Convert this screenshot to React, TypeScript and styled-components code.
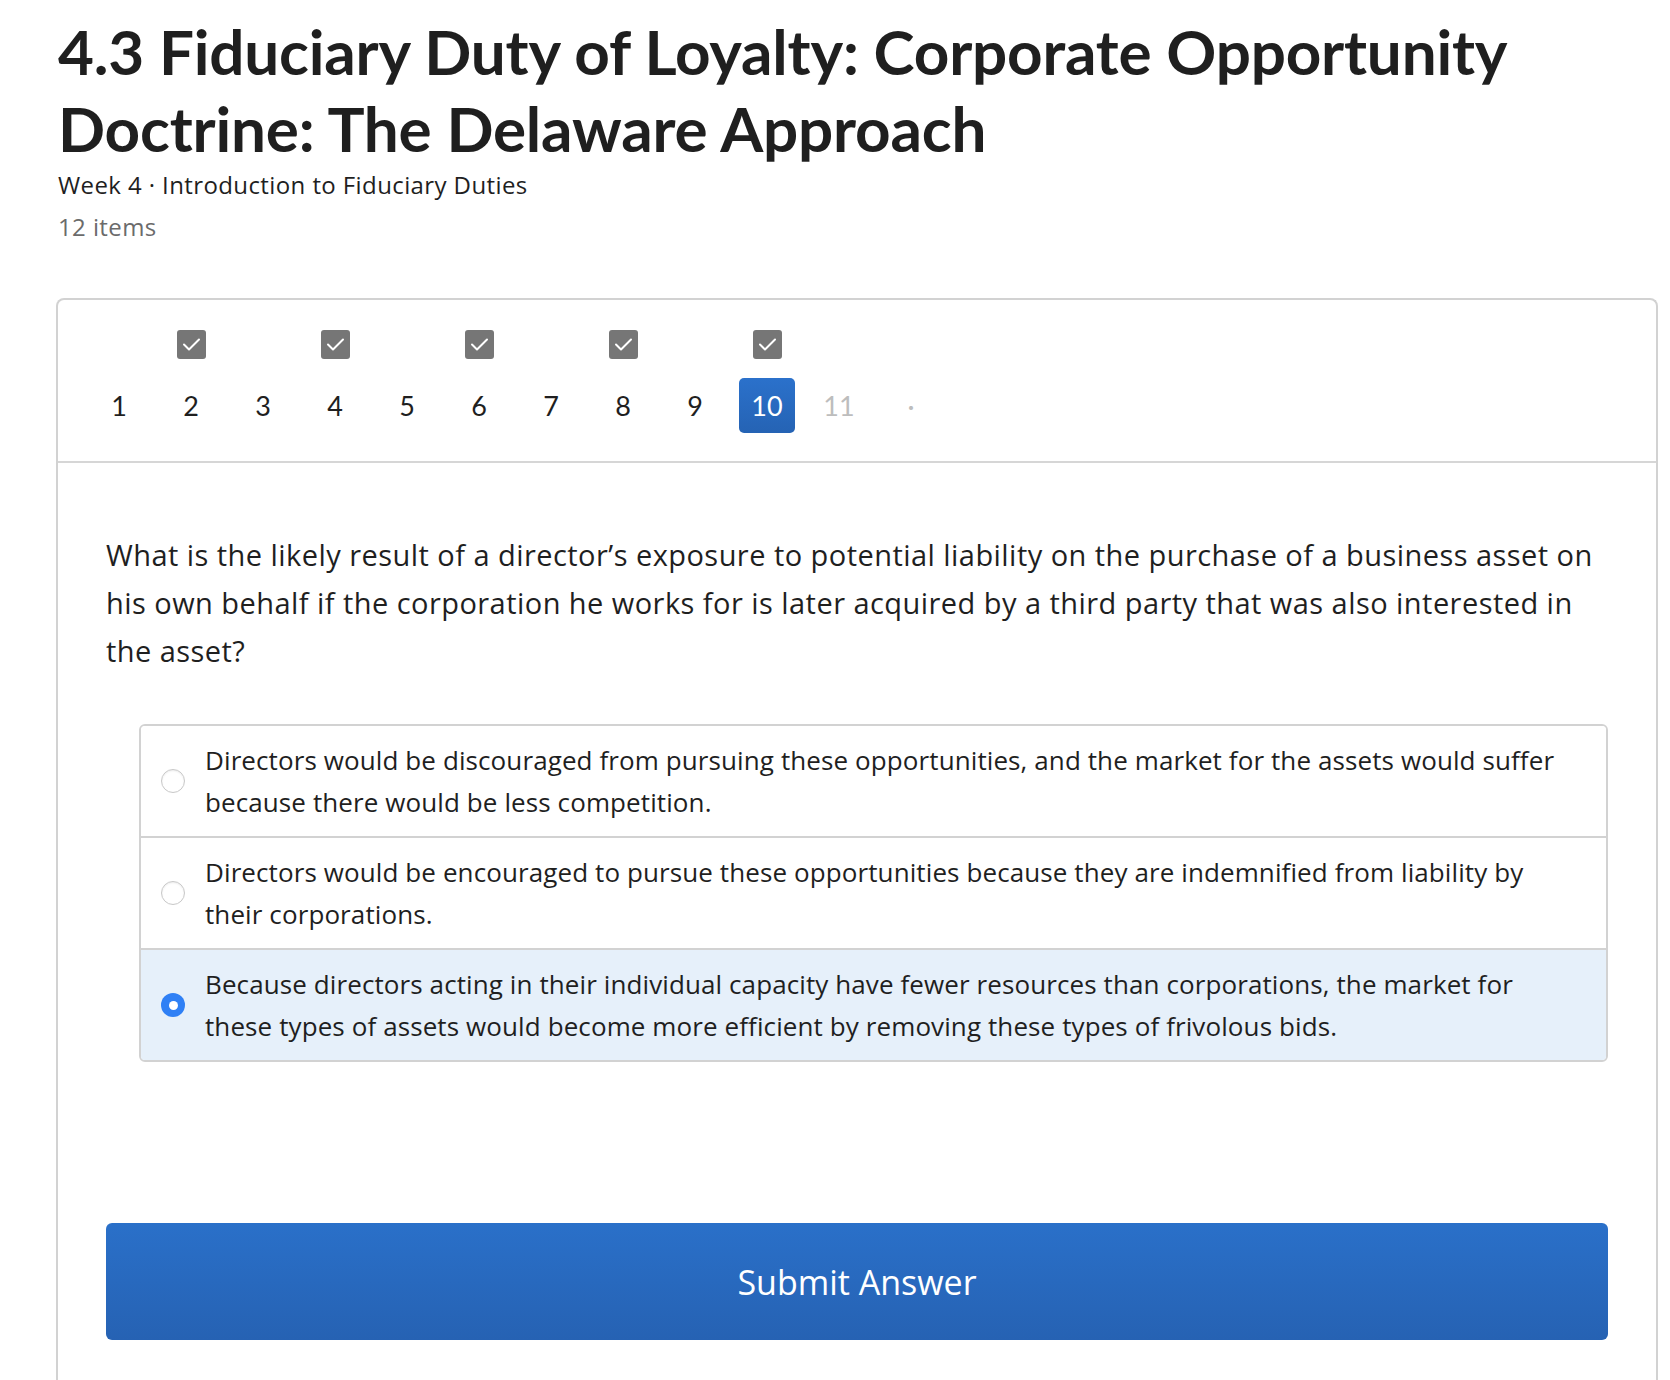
import styled, { createGlobalStyle } from 'styled-components'

const GlobalStyle = createGlobalStyle`
  html, body {
    margin: 0;
    padding: 0;
    background: #fff;
  }
  body {
    font-family: 'Open Sans', Lato, Arial, sans-serif;
    color: #1f1f1f;
    -webkit-font-smoothing: antialiased;
  }
`

const Page = styled.main`
  padding: 13px 12px 0 58px;
`

const Title = styled.h1`
  margin: 0;
  font-family: Lato, 'Open Sans', Arial, sans-serif;
  font-size: 62px;
  line-height: 77px;
  font-weight: 700;
  letter-spacing: -0.2px;
  color: #1f1f1f;
`

const Breadcrumb = styled.div`
  margin-top: 2px;
  font-size: 24px;
  line-height: 32px;
  letter-spacing: 0.4px;
`

const ItemCount = styled.div`
  margin-top: 10px;
  font-size: 24px;
  line-height: 32px;
  letter-spacing: 0.4px;
  color: #6b6b6b;
`

const Card = styled.section`
  margin-left: -2px;
  margin-top: 55px;
  border: 2px solid #d2d2d2;
  border-bottom: none;
  border-radius: 8px 8px 0 0;
  padding-bottom: 80px;
`

const Nav = styled.ol`
  list-style: none;
  margin: 0;
  padding: 30px 0 28px 33px;
  display: flex;
  gap: 16px;
  border-bottom: 2px solid #d6d6d6;
`

const NavItem = styled.li`
  width: 56px;
  display: flex;
  flex-direction: column;
  align-items: center;
  gap: 19px;
`

const Check = styled.span<{ $on: boolean }>`
  width: 29px;
  height: 29px;
  border-radius: 3px;
  background: #767676;
  display: flex;
  align-items: center;
  justify-content: center;
  visibility: ${(p) => (p.$on ? 'visible' : 'hidden')};
`

const Num = styled.span<{ $state: 'done' | 'active' | 'locked' }>`
  width: 56px;
  height: 55px;
  border-radius: 5px;
  display: flex;
  align-items: center;
  justify-content: center;
  font-family: Lato, 'Open Sans', Arial, sans-serif;
  font-size: 27px;
  color: ${(p) => (p.$state === 'active' ? '#fff' : p.$state === 'locked' ? '#bdbdbd' : '#1f1f1f')};
  background: ${(p) =>
    p.$state === 'active' ? 'linear-gradient(#2b71cb, #2563b4)' : 'transparent'};
`

const Body = styled.div`
  padding: 68px 48px 0 48px;
`

const Question = styled.p`
  margin: 0;
  font-size: 29px;
  line-height: 48px;
  letter-spacing: 0.45px;
`

const Options = styled.div`
  margin: 49px 0 0 33px;
  border: 2px solid #d2d2d2;
  border-radius: 6px;
  overflow: hidden;
`

const Option = styled.label<{ $selected: boolean }>`
  display: flex;
  align-items: center;
  gap: 20px;
  padding: 13px 40px 13px 20px;
  min-height: 84px;
  background: ${(p) => (p.$selected ? '#e6f0fa' : '#fff')};
  & + & {
    border-top: 2px solid #d2d2d2;
  }
`

const Radio = styled.span<{ $selected: boolean }>`
  flex: none;
  width: 24px;
  height: 24px;
  border-radius: 50%;
  box-sizing: border-box;
  display: flex;
  align-items: center;
  justify-content: center;
  background: ${(p) => (p.$selected ? '#2f80f5' : '#fff')};
  border: ${(p) => (p.$selected ? 'none' : '1px solid #c8c8c8')};
  box-shadow: ${(p) => (p.$selected ? 'none' : 'inset 0 1px 2px rgba(0,0,0,0.08)')};
  &::after {
    content: '';
    width: 9px;
    height: 9px;
    border-radius: 50%;
    background: #fff;
    display: ${(p) => (p.$selected ? 'block' : 'none')};
  }
`

const OptionText = styled.span`
  font-size: 26px;
  line-height: 42px;
  letter-spacing: 0.1px;
`

const Submit = styled.button`
  display: block;
  width: 100%;
  margin-top: 161px;
  height: 117px;
  border: none;
  border-radius: 6px;
  background: linear-gradient(#2a70c9, #2662b3);
  color: #fff;
  font-family: inherit;
  font-size: 34px;
  cursor: pointer;
`

const CheckIcon = () => (
  <svg width="19" height="15" viewBox="0 0 19 15" fill="none">
    <path d="M2 7.5l5 5L17 2.5" stroke="#fff" strokeWidth="2" strokeLinecap="round" strokeLinejoin="round" />
  </svg>
)

const items = [1, 2, 3, 4, 5, 6, 7, 8, 9, 10, 11]
const checked = new Set([2, 4, 6, 8, 10])

const options = [
  'Directors would be discouraged from pursuing these opportunities, and the market for the assets would suffer because there would be less competition.',
  'Directors would be encouraged to pursue these opportunities because they are indemnified from liability by their corporations.',
  'Because directors acting in their individual capacity have fewer resources than corporations, the market for these types of assets would become more efficient by removing these types of frivolous bids.',
]

export default function App() {
  const selected = 2
  return (
    <>
      <GlobalStyle />
      <Page>
        <Title>4.3 Fiduciary Duty of Loyalty: Corporate Opportunity Doctrine: The Delaware Approach</Title>
        <Breadcrumb>Week 4 · Introduction to Fiduciary Duties</Breadcrumb>
        <ItemCount>12 items</ItemCount>
        <Card>
          <Nav>
            {items.map((n) => (
              <NavItem key={n}>
                <Check $on={checked.has(n)}>
                  <CheckIcon />
                </Check>
                <Num $state={n === 10 ? 'active' : n > 10 ? 'locked' : 'done'}>{n}</Num>
              </NavItem>
            ))}
            <NavItem>
              <Check $on={false} />
              <Num $state="locked">·</Num>
            </NavItem>
          </Nav>
          <Body>
            <Question>
              What is the likely result of a director’s exposure to potential liability on the purchase of a business
              asset on his own behalf if the corporation he works for is later acquired by a third party that was also
              interested in the asset?
            </Question>
            <Options>
              {options.map((text, i) => (
                <Option key={i} $selected={i === selected}>
                  <Radio $selected={i === selected} />
                  <OptionText>{text}</OptionText>
                </Option>
              ))}
            </Options>
            <Submit>Submit Answer</Submit>
          </Body>
        </Card>
      </Page>
    </>
  )
}
